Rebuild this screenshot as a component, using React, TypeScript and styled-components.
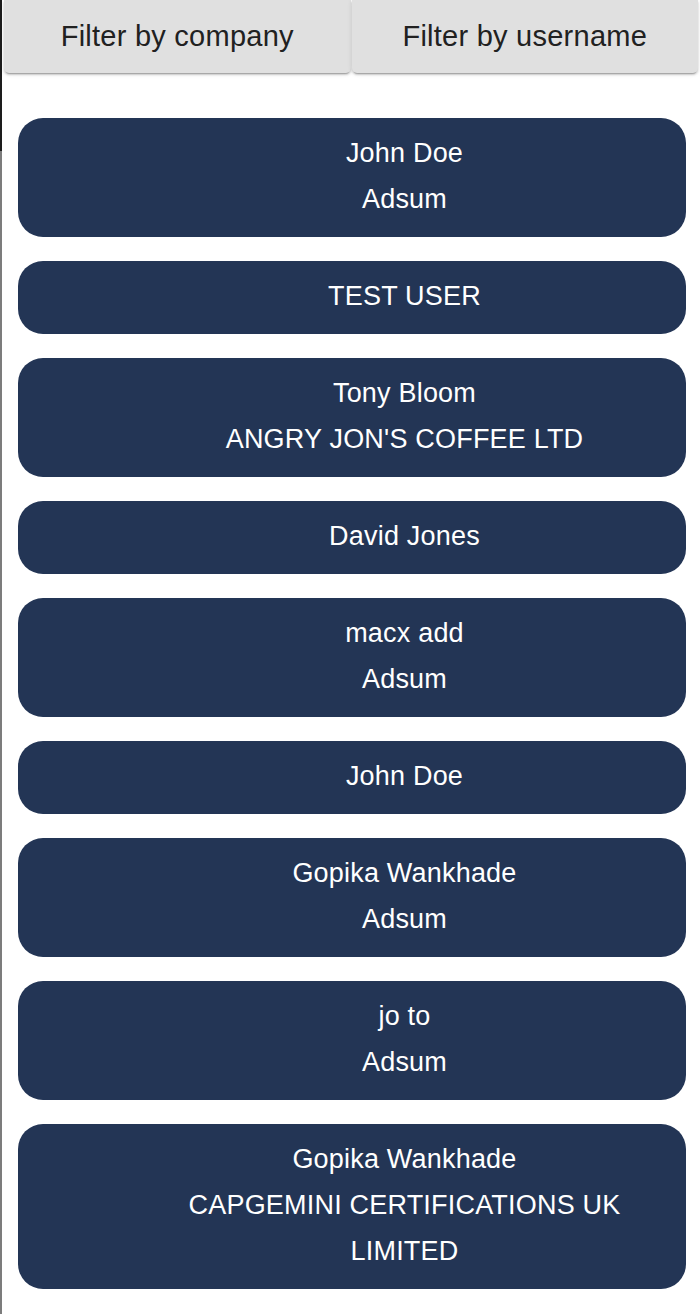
import React from "react";
import styled, { createGlobalStyle } from "styled-components";

const GlobalStyle = createGlobalStyle`
  html, body {
    margin: 0;
    padding: 0;
  }
  body {
    font-family: "Liberation Sans", Arial, Helvetica, sans-serif;
    background:
      linear-gradient(#1d1d1d, #1d1d1d) 0 0 / 2px 151px no-repeat,
      linear-gradient(#7c7c7c, #7c7c7c) 0 151px / 2px 100% no-repeat,
      #ffffff;
  }
`;

const Page = styled.div`
  display: flex;
  flex-direction: column;
  width: 700px;
  min-height: 1314px;
  box-sizing: border-box;
`;

const FilterBar = styled.div`
  display: flex;
  gap: 1px;
  padding: 0 2px 0 4px;
`;

const FilterButton = styled.button`
  flex: 1;
  height: 73px;
  border: none;
  margin: 0;
  padding: 0;
  background: #e0e0e0;
  color: #212121;
  font-family: "Liberation Sans", Arial, Helvetica, sans-serif;
  font-size: 29px;
  font-weight: 400;
  letter-spacing: 0.25px;
  border-radius: 0 0 5px 5px;
  box-shadow: 0 3px 1px -2px rgba(0, 0, 0, 0.2), 0 2px 2px 0 rgba(0, 0, 0, 0.14),
    0 1px 5px 0 rgba(0, 0, 0, 0.12);
  cursor: pointer;
`;

const CardList = styled.div`
  display: flex;
  flex-direction: column;
  gap: 24px;
  padding: 45px 14px 25px 18px;
`;

const UserCard = styled.div`
  background: #233555;
  color: #ffffff;
  border-radius: 25px;
  padding: 12px 16px 15px 121px;
  text-align: center;
  font-size: 27px;
  line-height: 46px;
  letter-spacing: 0.2px;
`;

const CardLine = styled.div`
  display: block;
`;

type User = { name: string; company?: string };

const users: User[] = [
  { name: "John Doe", company: "Adsum" },
  { name: "TEST USER" },
  { name: "Tony Bloom", company: "ANGRY JON'S COFFEE LTD" },
  { name: "David Jones" },
  { name: "macx add", company: "Adsum" },
  { name: "John Doe" },
  { name: "Gopika Wankhade", company: "Adsum" },
  { name: "jo to", company: "Adsum" },
  { name: "Gopika Wankhade", company: "CAPGEMINI CERTIFICATIONS UK LIMITED" },
];

export default function App() {
  return (
    <>
      <GlobalStyle />
      <Page>
        <FilterBar>
          <FilterButton>Filter by company</FilterButton>
          <FilterButton>Filter by username</FilterButton>
        </FilterBar>
        <CardList>
          {users.map((u, i) => (
            <UserCard key={i}>
              <CardLine>{u.name}</CardLine>
              {u.company && <CardLine>{u.company}</CardLine>}
            </UserCard>
          ))}
        </CardList>
      </Page>
    </>
  );
}
